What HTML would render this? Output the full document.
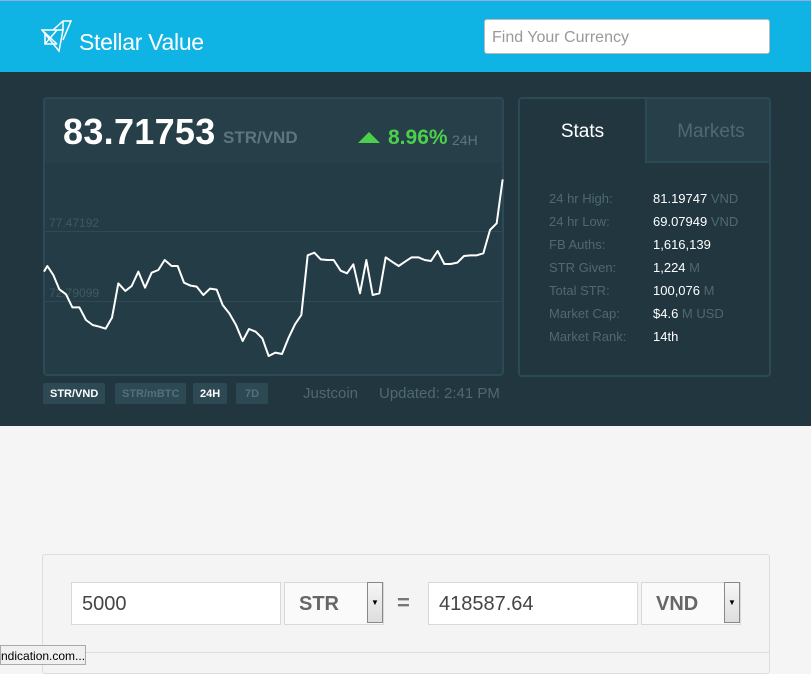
<!DOCTYPE html>
<html><head><meta charset="utf-8"><style>
*{margin:0;padding:0;box-sizing:border-box}
body{width:811px;height:666px;overflow:hidden;background:#f5f5f5;font-family:"Liberation Sans",sans-serif;position:relative}
.hdr{position:absolute;left:0;top:0;width:811px;height:72px;background:#0fb3e4;border-top:1px solid #9ad}
.logo-t{position:absolute;left:79px;top:28px;color:#fff;font-size:23px;letter-spacing:-0.3px}
.search{position:absolute;left:484px;top:18px;width:286px;height:35px;background:#fff;border:1px solid #bbb;border-radius:3px;color:#999;font-size:16px;padding:9px 7px}
.dark{position:absolute;left:0;top:72px;width:811px;height:354px;background:#22363f}
.card{position:absolute;left:43px;top:97px;width:461px;height:279px;background:#243c45;border:2px solid #2c4a55;border-radius:4px;overflow:hidden}
.card .top{position:absolute;left:0;top:0;width:100%;height:64px;background:#263f48}
.price{position:absolute;left:18px;top:12px;color:#fff;font-size:36px;font-weight:bold;letter-spacing:0.3px}
.pair{position:absolute;left:178px;top:29px;color:#5d757d;font-size:17px;font-weight:bold}
.chg{position:absolute;left:343px;top:27px;color:#4cd04c;font-size:21px;font-weight:bold}
.tri{position:absolute;left:313px;top:33px;width:0;height:0;border-left:11px solid transparent;border-right:11px solid transparent;border-bottom:11px solid #4cd04c}
.h24{position:absolute;left:407px;top:33px;color:#5d757d;font-size:14px}
.glabel{position:absolute;left:4px;color:#3f5862;font-size:12px}
.gline{position:absolute;left:0;width:100%;height:1px;background:#2f4a54}
.btn{position:absolute;top:383px;height:21px;background:#2c4954;border-radius:2px;font-size:11px;font-weight:bold;padding:5px 7px;color:#fff}
.meta{position:absolute;top:385px;color:#4f6872;font-size:15px}
.stats{position:absolute;left:518px;top:97px;width:253px;height:280px;border:2px solid #2c4a55;border-radius:4px;background:#22363f;overflow:hidden}
.tab1{position:absolute;left:0;top:0;width:125px;height:64px;color:#fff;font-size:19px;text-align:center;padding-top:22px}
.tab2{position:absolute;left:125px;top:0;width:130px;height:64px;background:#263f48;border-left:2px solid #2c4a55;border-bottom:2px solid #2c4a55;color:#4f6872;font-size:19px;text-align:center;padding-top:22px}
.row{position:absolute;left:29px;font-size:13px;color:#4f6872}
.row b{position:absolute;left:104px;font-weight:normal;color:#fff;white-space:nowrap}
.row b i{font-style:normal;color:#4f6872}
.conv{position:absolute;left:42px;top:554px;width:728px;height:120px;background:#f4f4f4;border:1px solid #ddd;border-radius:3px}
.inp{position:absolute;top:582px;height:43px;background:#fff;border:1px solid #d8d8d8;font-size:20px;color:#444;padding:10px 10px}
.sel{position:absolute;top:582px;height:43px;background:#fafafa;border:1px solid #d8d8d8;font-size:20px;font-weight:bold;color:#666;padding:10px 14px}
.arr{position:absolute;top:582px;width:16px;height:41px;background:linear-gradient(#f6f6f6,#ddd);border:1px solid #888;font-size:8px;text-align:center;padding-top:15px;color:#000}
.tip{position:absolute;left:0;top:645px;width:86px;height:20px;background:#f0f0f0;border:1px solid #aaa;font-size:12px;color:#000;padding:3px 0 0 0;white-space:nowrap;overflow:hidden}
</style></head><body>
<div class="hdr">
<svg style="position:absolute;left:41px;top:17px" width="34" height="36" viewBox="0 0 34 36" fill="none" stroke="#fff" stroke-width="1.5">
<path d="M1 12 H22 L18 33 Z"/><path d="M1 12 L16 26 M4 26 L16 12 M4 14 V26 H16"/><path d="M12 12 L22 3 H30 L22 22 M22 3 V12"/>
</svg>
<div class="logo-t">Stellar Value</div>
<div class="search">Find Your Currency</div>
</div>
<div class="dark"></div>
<div class="card">
<div class="top"></div>
<div class="price">83.71753</div><div class="pair">STR/VND</div>
<div class="tri"></div><div class="chg">8.96%</div><div class="h24">24H</div>
<div class="glabel" style="top:117px">77.47192</div>
<div class="gline" style="top:132px"></div>
<div class="glabel" style="top:187px">72.79099</div>
<div class="gline" style="top:202px"></div>
</div>
<svg style="position:absolute;left:40px;top:160px" width="470" height="210" viewBox="0 0 1410 630">
<polyline fill="none" stroke="#fff" stroke-width="6" stroke-linejoin="round" points="12,335 22,318 40,345 58,388 78,403 97,442 118,442 138,480 158,495 178,500 197,506 216,473 235,370 256,393 275,378 295,335 315,383 335,338 355,330 374,300 395,318 413,318 432,368 452,377 470,380 490,405 510,386 530,389 548,435 568,460 588,495 608,543 627,507 647,515 667,535 686,588 706,578 726,582 745,535 765,493 784,465 803,286 823,278 842,298 862,300 881,300 902,332 921,340 940,313 960,400 979,300 998,405 1018,400 1037,292 1056,305 1076,318 1095,305 1115,292 1135,292 1154,300 1173,303 1193,273 1213,312 1232,312 1252,308 1272,288 1291,286 1310,286 1330,280 1350,210 1370,190 1388,58"/>
</svg>
<div class="btn" style="left:43px">STR/VND</div>
<div class="btn" style="left:115px;color:#557079">STR/mBTC</div>
<div class="btn" style="left:193px">24H</div>
<div class="btn" style="left:236px;color:#557079;width:32px;text-align:center">7D</div>
<div class="meta" style="left:303px">Justcoin</div>
<div class="meta" style="left:379px">Updated: 2:41 PM</div>
<div class="stats">
<div class="tab1">Stats</div><div class="tab2">Markets</div>
<div class="row" style="top:92px">24 hr High:<b>81.19747 <i>VND</i></b></div>
<div class="row" style="top:115px">24 hr Low:<b>69.07949 <i>VND</i></b></div>
<div class="row" style="top:138px">FB Auths:<b>1,616,139</b></div>
<div class="row" style="top:161px">STR Given:<b>1,224 <i>M</i></b></div>
<div class="row" style="top:184px">Total STR:<b>100,076 <i>M</i></b></div>
<div class="row" style="top:207px">Market Cap:<b>$4.6 <i>M USD</i></b></div>
<div class="row" style="top:230px">Market Rank:<b>14th</b></div>
</div>
<div class="conv"></div>
<div style="position:absolute;left:43px;top:652px;width:726px;height:1px;background:#ddd"></div>
<div class="inp" style="left:71px;width:210px">5000</div>
<div class="sel" style="left:284px;width:100px">STR</div>
<div class="arr" style="left:367px">▼</div>
<div style="position:absolute;left:397px;top:590px;font-size:22px;font-weight:bold;color:#777">=</div>
<div class="inp" style="left:428px;width:210px">418587.64</div>
<div class="sel" style="left:641px;width:100px">VND</div>
<div class="arr" style="left:724px">▼</div>
<div class="tip">ndication.com...</div>
</body></html>
